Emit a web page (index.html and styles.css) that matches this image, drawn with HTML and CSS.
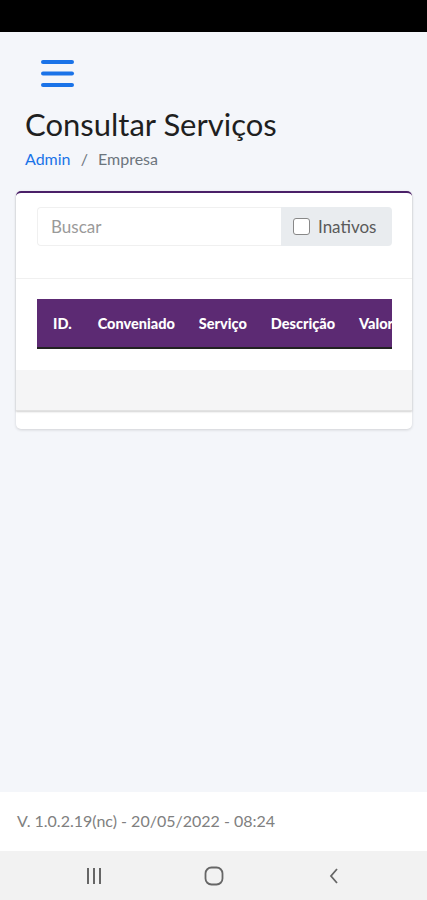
FILE: index.html
```html
<!DOCTYPE html>
<html lang="pt-BR">
  <head>
    <meta charset="UTF-8" />
    <title>Consultar Serviços</title>
    <link rel="stylesheet" href="styles.css">
  </head>
  <body>
    <div class="status-bar"></div>

    <main class="content">
      <button class="menu-btn" aria-label="Menu">
        <svg width="34" height="30" viewBox="0 0 34 30">
          <rect x="0" y="1" width="33" height="4" rx="2" fill="#1a73e8" />
          <rect x="0" y="12.5" width="33" height="4" rx="2" fill="#1a73e8" />
          <rect x="0" y="24" width="33" height="4" rx="2" fill="#1a73e8" />
        </svg>
      </button>

      <h1>Consultar Serviços</h1>
      <nav class="breadcrumb">
        <a href="#">Admin</a>
        <span class="sep">/</span>
        <span class="current">Empresa</span>
      </nav>

      <div class="card-wrap">
        <div class="card">
          <div class="card-header">
            <div class="input-group">
              <input type="text" placeholder="Buscar" />
              <label class="input-addon">
                <span class="check"></span>
                Inativos
              </label>
            </div>
          </div>
          <div class="card-body">
            <div class="table-responsive">
              <table>
                <thead>
                  <tr>
                    <th>ID.</th>
                    <th>Conveniado</th>
                    <th>Serviço</th>
                    <th>Descrição</th>
                    <th>Valor</th>
                  </tr>
                </thead>
              </table>
            </div>
          </div>
          <div class="card-footer"></div>
        </div>
      </div>
    </main>

    <footer class="version">V. 1.0.2.19(nc) - 20/05/2022 - 08:24</footer>

    <div class="nav-bar">
      <svg width="18" height="16" viewBox="0 0 18 16">
        <rect x="2" y="0" width="2" height="16" fill="#666" />
        <rect x="8" y="0" width="2" height="16" fill="#666" />
        <rect x="14" y="0" width="2" height="16" fill="#666" />
      </svg>
      <svg width="20" height="20" viewBox="0 0 20 20">
        <rect x="1.5" y="1.5" width="17" height="17" rx="6" fill="none" stroke="#666" stroke-width="1.8" />
      </svg>
      <svg width="12" height="18" viewBox="0 0 12 18">
        <path d="M9 2 L3 9 L9 16" fill="none" stroke="#666" stroke-width="1.8" />
      </svg>
    </div>
  </body>
</html>
```

FILE: styles.css
```css
* {
  box-sizing: border-box;
}
body {
  margin: 0;
  height: 900px;
  display: flex;
  flex-direction: column;
  font-family: Lato, "Open Sans", sans-serif;
  background: #f4f6fa;
  color: #212529;
}
.status-bar {
  height: 32px;
  background: #000;
}
.content {
  flex: 1;
  padding: 0 15px 0 16px;
}
.menu-btn {
  display: block;
  margin: 27px 0 0 25px;
  padding: 0;
  border: none;
  background: none;
}
h1 {
  margin: 13px 0 0 9px;
  font-size: 31px;
  font-weight: 400;
  line-height: 38px;
  color: #1f1f1f;
}
.breadcrumb {
  margin: 6px 0 0 9px;
  font-size: 16px;
  color: #6c757d;
}
.breadcrumb a {
  color: #1a73e8;
  text-decoration: none;
}
.breadcrumb .sep {
  margin: 0 6px;
}
.card-wrap {
  margin-top: 23px;
  background: #fff;
  border-radius: 5px;
  padding-bottom: 18px;
  box-shadow: 0 1px 3px rgba(0, 0, 0, 0.15);
}
.card {
  background: #fff;
  border-top: 2px solid #4a2068;
  border-radius: 5px 5px 0 0;
  box-shadow: 0 1px 2px rgba(0, 0, 0, 0.18);
}
.card-header {
  padding: 14px 20px 32px 21px;
  border-bottom: 1px solid #f0f0f0;
}
.input-group {
  display: flex;
  height: 39px;
}
.input-group input {
  flex: 1;
  min-width: 0;
  border: 1px solid #f0f0f0;
  border-right: none;
  border-radius: 4px 0 0 4px;
  padding: 0 13px;
  font-family: inherit;
  font-size: 17px;
  color: #495057;
}
.input-group input::placeholder {
  color: #9a9a9a;
}
.input-addon {
  display: flex;
  align-items: center;
  gap: 8px;
  width: 111px;
  padding-left: 12px;
  background: #e9ecef;
  border-radius: 0 4px 4px 0;
  font-size: 17px;
  color: #5a5a5a;
}
.check {
  width: 17px;
  height: 17px;
  border: 1px solid #888;
  border-radius: 3px;
  background: #fff;
}
.card-body {
  padding: 20px 20px 21px 21px;
}
.table-responsive {
  overflow: hidden;
}
table {
  border-collapse: collapse;
  white-space: nowrap;
}
th {
  height: 49px;
  padding: 0 12px;
  background: #5c2a73;
  border-bottom: 2px solid #222;
  color: #fff;
  font-size: 14.5px;
  font-weight: 900;
  text-align: left;
}
th:first-child {
  padding-left: 16px;
  padding-right: 14px;
}
.card-footer {
  height: 41px;
  background: #f5f5f6;
  border-bottom: 1px solid #e2e2e2;
}
.version {
  height: 59px;
  display: flex;
  align-items: center;
  padding-left: 17px;
  padding-bottom: 3px;
  background: #fff;
  font-size: 16px;
  color: #808080;
}
.nav-bar {
  height: 49px;
  display: grid;
  grid-template-columns: repeat(3, 120px);
  justify-content: center;
  justify-items: center;
  align-items: center;
  background: #f2f2f2;
}
```
